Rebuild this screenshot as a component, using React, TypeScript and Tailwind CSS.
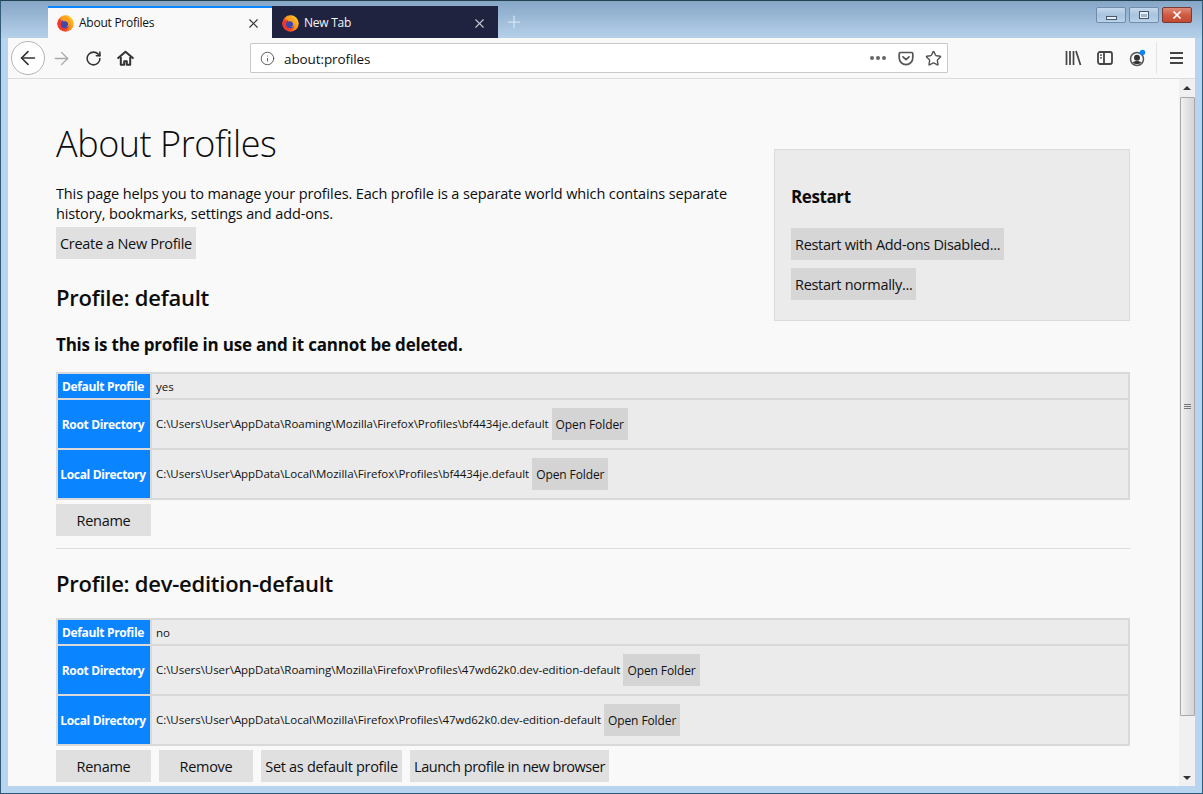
import { ArrowLeft, ArrowRight, RotateCw, Info, Star, X, Plus } from "lucide-react"

function FirefoxIcon() {
  return (
    <svg width="17" height="17" viewBox="0 0 32 32" className="shrink-0">
      <defs>
        <linearGradient id="ffx" x1="0.9" y1="0.1" x2="0.1" y2="0.9">
          <stop offset="0" stopColor="#ffd12e" />
          <stop offset="0.5" stopColor="#ff8a1a" />
          <stop offset="1" stopColor="#ee2b2e" />
        </linearGradient>
      </defs>
      <circle cx="16" cy="16" r="15.5" fill="url(#ffx)" />
      <circle cx="15" cy="17" r="8.5" fill="#3f48a8" />
      <path d="M8 6c3-3 7-5 11-5-2 1-4 3-4 5 5-1 9 2 10 7 0 5-3 9-8 10 4-2 5-6 3-9-2-2-5-3-8-2-1-2-3-4-4-6z" fill="#ff9f20" />
      <path d="M1 15c1-4 3-7 5-9 0 3 2 5 4 6-4 4-3 10 2 13 4 2 8 1 11-1-4 5-11 6-16 3-4-3-6-7-6-12z" fill="#f2362c" />
    </svg>
  )
}

function WinButton({ kind }: { kind: "min" | "max" | "close" }) {
  if (kind === "close") {
    return (
      <div className="w-[30px] h-[16px] rounded-[2px] border border-[#7a3a32] bg-gradient-to-b from-[#dc8c78] via-[#cf5a40] to-[#c24a34] flex items-center justify-center">
        <X size={12} strokeWidth={3.5} className="text-white" />
      </div>
    )
  }
  return (
    <div className="w-[30px] h-[16px] rounded-[2px] border border-[#6f8cab] bg-gradient-to-b from-[#c5d9ee] via-[#a9c3de] to-[#b9d1e9] flex items-center justify-center">
      {kind === "min" ? (
        <div className="w-[11px] h-[4px] mt-[5px] bg-[#e8eef5] border border-[#45586c]" />
      ) : (
        <div className="w-[10px] h-[8px] bg-[#e8eef5] border border-[#45586c] flex items-center justify-center">
          <div className="w-[6px] h-[3px] bg-[#9db6cf]" />
        </div>
      )}
    </div>
  )
}

function Tab({ active, title }: { active?: boolean; title: string }) {
  return (
    <div
      className={
        active
          ? "w-[224px] h-[32px] bg-[#f9f9fa] border-t-2 border-[#0a84ff] flex items-center pl-[9px] pr-[11px] text-[#111]"
          : "w-[226px] h-[32px] bg-[#202340] border-t-2 border-[#202340] flex items-center pl-[10px] pr-[11px] text-[#f4f4f6]"
      }
    >
      <FirefoxIcon />
      <span className="ml-[5px] text-[12px] tracking-[-0.25px] flex-1">{title}</span>
      <X size={15} strokeWidth={1.8} className={active ? "text-[#333]" : "text-[#c4c5cf]"} />
    </div>
  )
}

function LibraryIcon() {
  return (
    <svg width="17" height="16" viewBox="0 0 17 16" fill="none" stroke="#444" strokeWidth="1.7">
      <path d="M1.500 1v14M5 1v14M8.500 1v14M11 1l4.500 14" />
    </svg>
  )
}

function SidebarIcon() {
  return (
    <svg width="16" height="14" viewBox="0 0 16 14" fill="none" stroke="#444" strokeWidth="1.8">
      <rect x="1" y="1" width="14" height="12" rx="2" />
      <path d="M7 1v12" />
      <path d="M3 4.200h2M3 6.800h2" strokeWidth="1.300" />
    </svg>
  )
}

function AccountIcon() {
  return (
    <svg width="18" height="18" viewBox="0 0 18 18">
      <circle cx="8" cy="10" r="6.500" fill="none" stroke="#555" strokeWidth="1.500" />
      <circle cx="8" cy="8.800" r="3" fill="#333" />
      <path d="M3.800 13.500c1.500-2 6.900-2 8.400 0-2 2-6.400 2-8.400 0z" fill="#333" />
      <circle cx="13.500" cy="3.500" r="2.700" fill="#0a84ff" />
    </svg>
  )
}

function PocketIcon() {
  return (
    <svg width="16" height="15" viewBox="0 0 16 15" fill="none" stroke="#555" strokeWidth="1.700">
      <path d="M2.500 1.500h11a1.300 1.300 0 0 1 1.300 1.300v4a6.800 6.800 0 0 1-13.600 0v-4a1.300 1.300 0 0 1 1.300-1.300z" />
      <path d="M5 5.800l3 2.800 3-2.800" strokeLinecap="round" strokeLinejoin="round" />
    </svg>
  )
}

function HomeIcon() {
  return (
    <svg width="17" height="16" viewBox="0 0 17 16" fill="none" stroke="#333" strokeWidth="2" strokeLinejoin="round">
      <path d="M1.200 8l7.300-6.300L15.800 8" strokeLinecap="round" />
      <path d="M3.800 7v7.800h3.400v-3.600h2.600v3.600h3.400V7" />
    </svg>
  )
}

function PageButton({ children, className = "" }: { children: React.ReactNode; className?: string }) {
  return (
    <button className={"h-[32px] pt-[1px] bg-[#e0e0e1] text-[14.5px] tracking-[-0.3px] text-[#111] px-[4px] whitespace-nowrap " + className}>
      {children}
    </button>
  )
}

function ProfileTable({ isDefault, rootDir, localDir }: { isDefault: string; rootDir: string; localDir: string }) {
  const thCls = "w-[94px] bg-[#0a84ff] border-2 border-[#d9d9d9] text-white text-[12px] font-bold tracking-[-0.35px] text-center whitespace-nowrap p-0 pt-[1px] pr-[2px]"
  const tdCls = "bg-[#ebebeb] border-2 border-[#d9d9d9] text-[11.5px] tracking-[-0.04px] text-[#111] pl-[4px] py-0 pt-[1px]"
  const folderBtn = "h-[32px] ml-[3px] px-[4px] pt-[2px] bg-[#d4d4d4] text-[12px] tracking-[-0.1px] text-[#111] align-middle -translate-y-[1px]"
  return (
    <table className="w-[1074px] border-collapse border-spacing-0">
      <tbody>
        <tr className="h-[26px]">
          <th className={thCls}>Default Profile</th>
          <td className={tdCls}>{isDefault}</td>
        </tr>
        <tr className="h-[50px]">
          <th className={thCls}>Root Directory</th>
          <td className={tdCls}>
            {rootDir}
            <button className={folderBtn}>Open Folder</button>
          </td>
        </tr>
        <tr className="h-[50px]">
          <th className={thCls}>Local Directory</th>
          <td className={tdCls}>
            {localDir}
            <button className={folderBtn}>Open Folder</button>
          </td>
        </tr>
      </tbody>
    </table>
  )
}

export default function App() {
  return (
    <div className="w-[1203px] h-[794px] overflow-hidden flex flex-col font-['Open_Sans',sans-serif] bg-[#b9d4ee] border border-t-[#23404f] border-x-[#2f5a78] border-b-[#2f5a78]">
      {/* Title bar with tabs */}
      <div className="h-[37px] shrink-0 bg-gradient-to-b from-[#86a6c6] to-[#b6d0ea] flex items-end pl-[47px] pr-[10px]">
        <Tab active title="About Profiles" />
        <Tab title="New Tab" />
        <div className="w-[32px] h-[32px] flex items-center justify-center">
          <Plus size={20} strokeWidth={1.500} className="text-[#d6e4f2]" />
        </div>
        <div className="ml-auto self-start flex gap-[3px] mt-[6px]">
          <WinButton kind="min" />
          <WinButton kind="max" />
          <WinButton kind="close" />
        </div>
      </div>

      <div className="mx-[7px] flex-1 min-h-0 flex flex-col">
        {/* Toolbar */}
        <div className="h-[41px] shrink-0 bg-[#f9f9fa] border-b border-[#dcdcde] flex items-center">
          <div className="ml-[3px] w-[34px] h-[34px] rounded-full border border-[#b4b4b6] bg-white flex items-center justify-center">
            <ArrowLeft size={22} strokeWidth={1.800} className="text-[#333]" />
          </div>
          <ArrowRight size={21} strokeWidth={1.600} className="ml-[6px] text-[#aaa]" />
          <RotateCw size={17} strokeWidth={2.200} className="ml-[13px] text-[#333]" />
          <div className="ml-[15px] flex"><HomeIcon /></div>
          <div className="ml-[116px] w-[698px] h-[30px] bg-white border border-[#c9c9cb] rounded-[1px] flex items-center pl-[9px] pr-[5px]">
            <Info size={15} strokeWidth={1.500} className="text-[#555]" />
            <span className="ml-[9px] pt-[2px] text-[13.500px] tracking-[-0.1px] text-[#111] flex-1">about:profiles</span>
            <div className="flex gap-[2px] mr-[12px]">
              <div className="w-[4px] h-[4px] rounded-full bg-[#666]" />
              <div className="w-[4px] h-[4px] rounded-full bg-[#666]" />
              <div className="w-[4px] h-[4px] rounded-full bg-[#666]" />
            </div>
            <PocketIcon />
            <Star size={17} strokeWidth={2} className="ml-[11px] text-[#555]" />
          </div>
          <div className="ml-[117px] flex items-center"><LibraryIcon /></div>
          <div className="ml-[15px] flex"><SidebarIcon /></div>
          <div className="ml-[16px] flex"><AccountIcon /></div>
          <div className="ml-[9px] h-[32px] w-[1px] bg-[#e4e4e6]" />
          <div className="ml-[13px] flex flex-col gap-[3px]">
            <div className="w-[13px] h-[2px] bg-[#444]" />
            <div className="w-[13px] h-[2px] bg-[#444]" />
            <div className="w-[13px] h-[2px] bg-[#444]" />
          </div>
        </div>

        <div className="flex-1 min-h-0 flex">
          {/* Page */}
          <div className="w-[1171px] bg-[#f9f9fa] overflow-hidden pl-[48px] pr-[49px] text-[#0c0c0d]">
            <div className="float-right mt-[70px] w-[356px] h-[172px] bg-[#ebebeb] border border-[#dcdcdc] pl-[16px] pt-[35px]">
              <div className="text-[17px] font-bold leading-[24px] tracking-[-0.4px]">Restart</div>
              <PageButton className="block mt-[19px] !bg-[#d6d6d6]">Restart with Add-ons Disabled...</PageButton>
              <PageButton className="block mt-[8px] !bg-[#d6d6d6]">Restart normally...</PageButton>
            </div>
            <h1 className="mt-[40px] text-[36px] leading-[50px] font-light tracking-[-0.45px]">About Profiles</h1>
            <p className="mt-[15px] w-[700px] text-[14.500px] leading-[20px] tracking-[-0.13px]">
              This page helps you to manage your profiles. Each profile is a separate world which contains separate history, bookmarks, settings and add-ons.
            </p>
            <PageButton className="block mt-[3px]">Create a New Profile</PageButton>
            <h2 className="mt-[23px] text-[22px] leading-[30px] font-semibold tracking-[-0.25px]">Profile: default</h2>
            <h3 className="mt-[21px] text-[17px] leading-[24px] font-bold tracking-[-0.2px]">This is the profile in use and it cannot be deleted.</h3>
            <div className="mt-[15px]">
              <ProfileTable
                isDefault="yes"
                rootDir="C:\Users\User\AppData\Roaming\Mozilla\Firefox\Profiles\bf4434je.default"
                localDir="C:\Users\User\AppData\Local\Mozilla\Firefox\Profiles\bf4434je.default"
              />
            </div>
            <PageButton className="block mt-[4px] w-[95px]">Rename</PageButton>
            <div className="mt-[12px] h-[1px] bg-[#dcdcdc]" />
            <h2 className="mt-[19px] text-[22px] leading-[30px] font-semibold tracking-[-0.25px]">Profile: dev-edition-default</h2>
            <div className="mt-[20px]">
              <ProfileTable
                isDefault="no"
                rootDir="C:\Users\User\AppData\Roaming\Mozilla\Firefox\Profiles\47wd62k0.dev-edition-default"
                localDir="C:\Users\User\AppData\Local\Mozilla\Firefox\Profiles\47wd62k0.dev-edition-default"
              />
            </div>
            <div className="mt-[4px] flex gap-[8px]">
              <PageButton className="w-[95px]">Rename</PageButton>
              <PageButton className="w-[94px]">Remove</PageButton>
              <PageButton className="w-[141px]">Set as default profile</PageButton>
              <PageButton className="w-[199px] !tracking-[-0.48px]">Launch profile in new browser</PageButton>
            </div>
          </div>

          {/* Scrollbar */}
          <div className="w-[16px] bg-[#f0f0f0] flex flex-col items-center">
            <div className="h-[18px] flex items-center justify-center">
              <div className="w-0 h-0 border-x-[4px] border-x-transparent border-b-[4px] border-b-[#333]" />
            </div>
            <div className="w-[15px] h-[619px] rounded-[1px] border border-[#a8a8a8] bg-gradient-to-r from-[#f1f1f1] to-[#d4d4d4] flex flex-col items-center justify-center gap-[1px]">
              <div className="w-[7px] h-[1px] bg-[#777]" />
              <div className="w-[7px] h-[1px] bg-[#777]" />
              <div className="w-[7px] h-[1px] bg-[#777]" />
            </div>
            <div className="mt-auto h-[17px] flex items-center justify-center">
              <div className="w-0 h-0 border-x-[4px] border-x-transparent border-t-[4px] border-t-[#333]" />
            </div>
          </div>
        </div>
      </div>
      <div className="h-[7px] shrink-0" />
    </div>
  )
}
